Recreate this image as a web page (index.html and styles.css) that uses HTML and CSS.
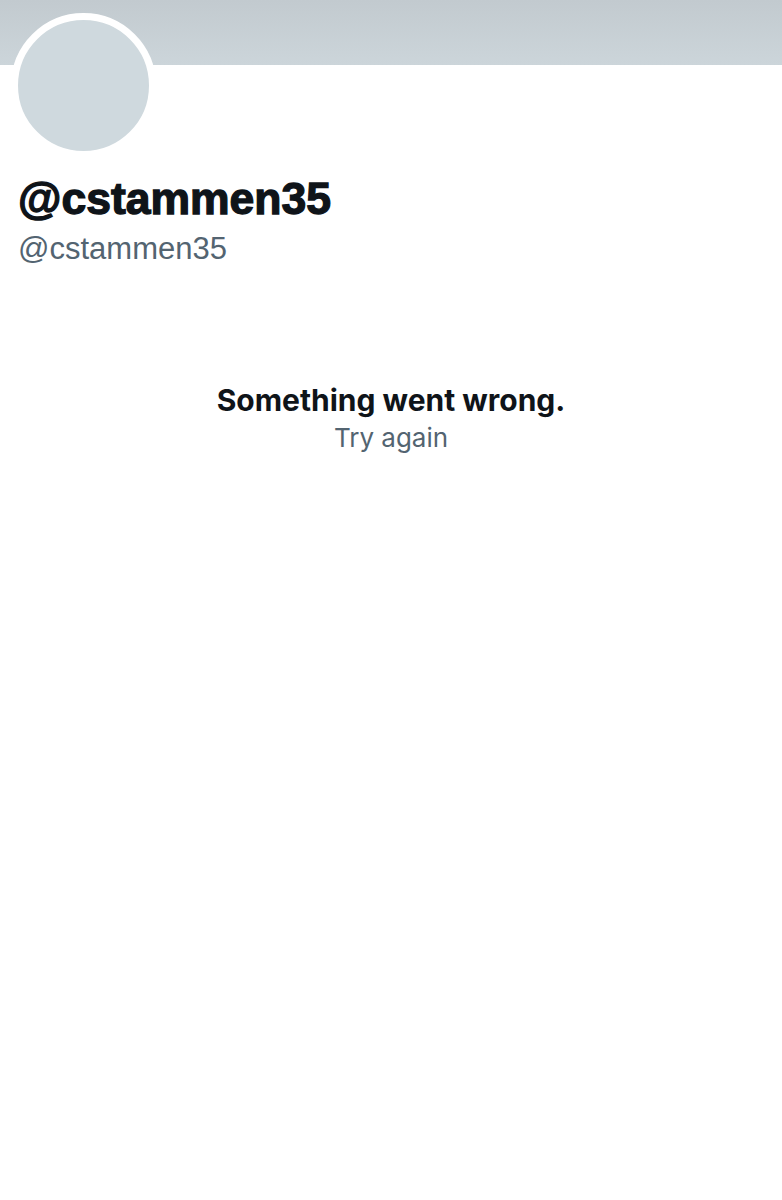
FILE: index.html
```html
<!DOCTYPE html>
<html>
<head>
<meta charset="utf-8">
<link rel="stylesheet" href="styles.css">
</head>
<body>
<div class="page">
  <div class="banner"></div>
  <div class="avatar"></div>
  <div class="names">
    <div class="display">@cstammen35</div>
    <div class="handle">@cstammen35</div>
  </div>
  <div class="error">
    <div class="error-title">Something went wrong.</div>
    <div class="error-retry">Try again</div>
  </div>
</div>
</body>
</html>
```

FILE: styles.css
```css
html, body {
  margin: 0;
  padding: 0;
  background: #ffffff;
}
.page {
  width: 782px;
  min-height: 1200px;
  display: flex;
  flex-direction: column;
}
.banner {
  height: 65px;
  background: linear-gradient(180deg, #c2cacf 0%, #ccd5da 100%);
}
.avatar {
  width: 131px;
  height: 131px;
  border-radius: 50%;
  background: #cfd9de;
  border: 7px solid #ffffff;
  margin-top: -52px;
  margin-left: 11px;
}
.names {
  padding-left: 18px;
  display: flex;
  flex-direction: column;
}
.display {
  font-family: "Liberation Sans", Arial, sans-serif;
  font-weight: 700;
  font-size: 44.5px;
  line-height: 52px;
  color: #0f1419;
  -webkit-text-stroke: 1.3px #0f1419;
  margin-top: 15px;
}
.handle {
  font-family: "Liberation Sans", Arial, sans-serif;
  font-size: 31px;
  line-height: 38px;
  color: #536471;
  margin-top: 5px;
}
.error {
  margin-top: 114px;
  display: flex;
  flex-direction: column;
  align-items: center;
  font-family: Inter, "Open Sans", sans-serif;
}
.error-title {
  font-weight: 700;
  font-size: 30px;
  line-height: 36px;
  color: #0f1419;
}
.error-retry {
  font-size: 26px;
  line-height: 32px;
  color: #536471;
  margin-top: 4px;
}
```
